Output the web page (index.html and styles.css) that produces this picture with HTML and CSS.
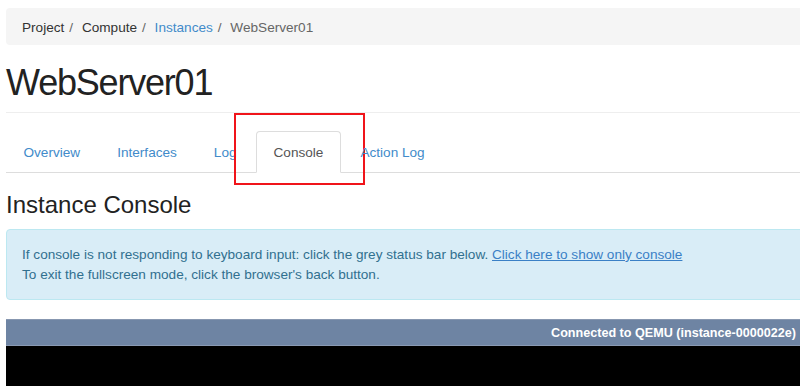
FILE: index.html
```html
<!DOCTYPE html>
<html lang="en">
<head>
<meta charset="utf-8">
<title>WebServer01 - Instance Console</title>
<link rel="stylesheet" href="styles.css">
</head>
<body>
<div class="page">
  <ol class="breadcrumb">
    <li class="crumb">Project</li>
    <li class="crumb">Compute</li>
    <li class="crumb"><a class="crumb-link" href="#">Instances</a></li>
    <li class="crumb crumb-active">WebServer01</li>
  </ol>

  <div class="page-header">
    <h1 class="page-title">WebServer01</h1>
  </div>

  <ul class="nav-tabs">
    <li class="tab"><a class="tab-link" href="#">Overview</a></li>
    <li class="tab"><a class="tab-link" href="#">Interfaces</a></li>
    <li class="tab"><a class="tab-link" href="#">Log</a></li>
    <li class="tab tab-active"><a class="tab-link" href="#">Console</a><span class="highlight"></span></li>
    <li class="tab"><a class="tab-link" href="#">Action Log</a></li>
  </ul>

  <h3 class="section-title">Instance Console</h3>

  <div class="alert">
    <p class="alert-line">If console is not responding to keyboard input: click the grey status bar below. <a class="alert-link" href="#">Click here to show only console</a></p>
    <p class="alert-line">To exit the fullscreen mode, click the browser's back button.</p>
  </div>

  <div class="console">
    <div class="status-bar">Connected to QEMU (instance-0000022e)</div>
    <div class="screen"></div>
  </div>
</div>
</body>
</html>
```
FILE: styles.css
```css
html, body {
  margin: 0;
  padding: 0;
  background: #fff;
  overflow: hidden;
}

body {
  font-family: "Liberation Sans", Arial, Helvetica, sans-serif;
  font-size: 13.6px;
  line-height: 20px;
  color: #333;
}

.page {
  width: 830px;
  padding: 8px 0 0 6px;
}

/* Breadcrumb */
.breadcrumb {
  list-style: none;
  margin: 0;
  padding: 10px 16px 7px;
  background: #f5f5f5;
  border-radius: 4px;
  display: flex;
}

.crumb {
  color: #333;
}

.crumb + .crumb::before {
  content: "/\00a0";
  padding: 0 5px;
  color: #666;
}

.crumb-link {
  color: #428bca;
  text-decoration: none;
}

.crumb-active {
  color: #666;
}

/* Page header */
.page-header {
  margin: 18px 0 0;
  padding-bottom: 9px;
  border-bottom: 1px solid #eee;
}

.page-title {
  margin: 0;
  font-size: 36px;
  line-height: 1.1;
  font-weight: 400;
  letter-spacing: -1.2px;
  color: #222;
}

/* Tabs */
.nav-tabs {
  list-style: none;
  margin: 18px 0 0;
  padding: 0;
  display: flex;
  border-bottom: 1px solid #ddd;
}

.tab {
  position: relative;
  margin: 0 2px -1px 0;
}

.tab-link {
  display: block;
  padding: 11px 16.5px 9px;
  line-height: 20px;
  border: 1px solid transparent;
  border-radius: 4px 4px 0 0;
  color: #428bca;
  text-decoration: none;
}

.tab-active .tab-link {
  color: #555;
  background: #fff;
  border-color: #ddd #ddd transparent;
}

.highlight {
  position: absolute;
  left: -22px;
  top: -18px;
  width: 131px;
  height: 72px;
  box-sizing: border-box;
  border: 2px solid #f0141a;
  pointer-events: none;
}

/* Section title */
.section-title {
  margin: 19px 0 11px;
  font-size: 24px;
  line-height: 1.1;
  font-weight: 400;
  color: #222;
}

/* Alert */
.alert {
  padding: 15px 15px 14px;
  background: #d9edf7;
  border: 1px solid #bce8f1;
  border-radius: 4px;
  color: #31708f;
}

.alert-line {
  margin: 0;
}

.alert-link {
  color: #3a80c6;
  text-decoration: underline;
}

/* Console */
.console {
  width: 800px;
  margin-top: 19px;
}

.status-bar {
  background: #6e84a3;
  border-top: 1px solid #8797b0;
  border-bottom: 1px solid #8a9ab3;
  padding: 1px 10px 0 0;
  line-height: 24px;
  text-align: right;
  color: #fff;
  font-weight: 700;
  font-size: 12.6px;
}

.screen {
  height: 40px;
  background: #000;
}
```
